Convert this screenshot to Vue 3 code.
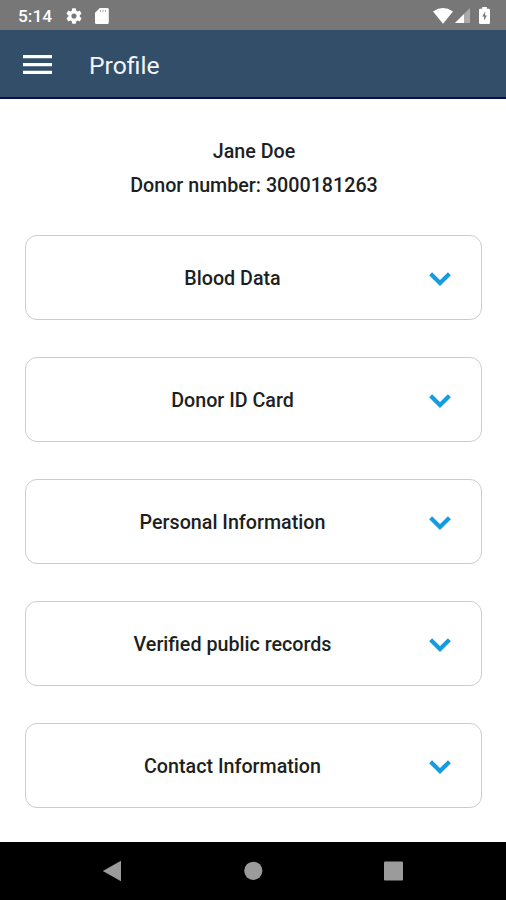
<script setup>
import { ref } from 'vue'

const sections = [
  'Blood Data',
  'Donor ID Card',
  'Personal Information',
  'Verified public records',
  'Contact Information',
]
const selected = ref(null)
</script>

<template>
  <div class="screen">
    <div class="status">
      <span class="clock">5:14</span>
      <svg class="gear" width="16" height="16" viewBox="2 2 20 20">
        <path fill="#fff" d="M19.14 12.94c.04-.3.06-.61.06-.94s-.02-.64-.07-.94l2.03-1.58a.49.49 0 0 0 .12-.61l-1.92-3.32a.49.49 0 0 0-.59-.22l-2.39.96a7 7 0 0 0-1.62-.94l-.36-2.54a.48.48 0 0 0-.48-.41h-3.84a.47.47 0 0 0-.47.41l-.36 2.54c-.59.24-1.13.57-1.62.94l-2.39-.96a.48.48 0 0 0-.59.22L2.74 8.87a.47.47 0 0 0 .12.61l2.03 1.58a6 6 0 0 0 0 1.88l-2.03 1.58a.49.49 0 0 0-.12.61l1.92 3.32c.12.22.37.29.59.22l2.39-.96c.5.38 1.03.7 1.62.94l.36 2.54c.05.24.24.41.48.41h3.84c.24 0 .44-.17.47-.41l.36-2.54a6.7 6.7 0 0 0 1.62-.94l2.39.96c.22.08.47 0 .59-.22l1.92-3.32a.47.47 0 0 0-.12-.61zM12 15.2a3.2 3.2 0 1 1 0-6.4 3.2 3.2 0 0 1 0 6.4z" />
      </svg>
      <svg class="card-icon" width="14" height="16" viewBox="0 0 14 16">
        <path fill="#fff" d="M4.8 0H12.4Q13.8 0 13.8 1.5V14.5Q13.8 16 12.4 16H1.5Q0 16 0 14.5V4.8z" />
        <path stroke="#aaa" stroke-width="1" d="M5.6 1.8v2.4M8 1.8v2.4M10.4 1.8v2.4" />
      </svg>
      <span class="spacer"></span>
      <svg class="wifi" width="20" height="16" viewBox="0 0 20 16">
        <path fill="#fff" d="M0 3.4Q10-3.2 20 3.4L10 15.7z" />
      </svg>
      <svg class="signal" width="15" height="15" viewBox="0 0 15 15">
        <path fill="#aaa" d="M15 0V15H0z" />
        <path fill="#fff" d="M9 6V15H0z" />
      </svg>
      <svg class="battery" width="11" height="17" viewBox="0 0 11 17">
        <path fill="#fff" d="M3.2 0h4.6v1.7H9.7Q11 1.7 11 3V15.7Q11 17 9.7 17H1.3Q0 17 0 15.7V3Q0 1.7 1.3 1.7H3.2z" />
        <path fill="#777" d="M6.2 4.4 3.2 9.6H5.1v4L7.9 8.4H6.1z" />
      </svg>
    </div>

    <header class="bar">
      <svg class="menu" width="29" height="21" viewBox="0 0 29 21">
        <path stroke="#fff" stroke-width="3.2" d="M0 2.7h29M0 10.6h29M0 18.4h29" />
      </svg>
      <h1>Profile</h1>
    </header>

    <main>
      <div class="donor">
        <p class="name">Jane Doe</p>
        <p class="number">Donor number: 3000181263</p>
      </div>
      <div class="list">
        <button v-for="s in sections" :key="s" class="section" @click="selected = s">
          <span class="label">{{ s }}</span>
          <svg class="chevron" width="24" height="16" viewBox="0 0 24 16">
            <path fill="none" stroke="#159be0" stroke-width="4.2" d="M2.6 2.8 12 12 21.4 2.8" />
          </svg>
        </button>
      </div>
    </main>

    <nav>
      <svg width="20" height="22" viewBox="0 0 20 22"><path fill="#9b9b9b" d="M.8 11 19 .8V21.2z" /></svg>
      <svg width="20" height="20" viewBox="0 0 20 20"><circle cx="10.3" cy="9.8" r="9.1" fill="#9b9b9b" /></svg>
      <svg width="20" height="20" viewBox="0 0 20 20"><rect x="0" y=".5" width="19" height="19" rx="1" fill="#9b9b9b" /></svg>
    </nav>
  </div>
</template>

<style>
body {
  margin: 0;
  background: #fff;
}
</style>

<style scoped>
.screen {
  width: 506px;
  height: 900px;
  display: flex;
  flex-direction: column;
  overflow: hidden;
  font-family: Roboto, "Liberation Sans", sans-serif;
  color: #1d1f22;
}
svg {
  display: block;
  flex: none;
}
.status {
  box-sizing: border-box;
  height: 30px;
  display: flex;
  align-items: center;
  padding: 1px 16px 0 18px;
  background: #777;
  color: #fff;
}
.clock {
  width: 48px;
  font-size: 17.3px;
  line-height: 20px;
  font-weight: 500;
}
.card-icon {
  margin-left: 12.5px;
}
.spacer {
  flex: 1;
}
.signal {
  margin-left: 2px;
}
.battery {
  margin-left: 9px;
}
.bar {
  box-sizing: border-box;
  height: 69px;
  display: flex;
  align-items: center;
  padding: 2px 0 0 23px;
  background: #324e69;
  border-bottom: 2px solid #0c0c52;
}
h1 {
  margin: 3px 0 0 37px;
  font-size: 24.7px;
  line-height: 30px;
  font-weight: 400;
  color: #f2f5fa;
}
main {
  flex: 1;
  padding: 36px 24px 0 25px;
}
.donor {
  padding-left: 1px;
  text-align: center;
  font-size: 19.7px;
  font-weight: 500;
  line-height: 34px;
}
p {
  margin: 0;
}
.list {
  display: flex;
  flex-direction: column;
  gap: 37px;
  margin-top: 32px;
}
.section {
  box-sizing: border-box;
  height: 85px;
  display: flex;
  align-items: center;
  padding: 2px 29px 0 0;
  border: 1.5px solid #ccc;
  border-radius: 12px;
  background: #fff;
  color: inherit;
  font: inherit;
}
.label {
  flex: 1;
  padding-left: 11px;
  text-align: center;
  font-size: 19.7px;
  font-weight: 500;
  line-height: 24px;
}
nav {
  box-sizing: border-box;
  height: 58px;
  display: flex;
  align-items: center;
  justify-content: space-between;
  padding: 0 102px;
  background: #000;
}
</style>
